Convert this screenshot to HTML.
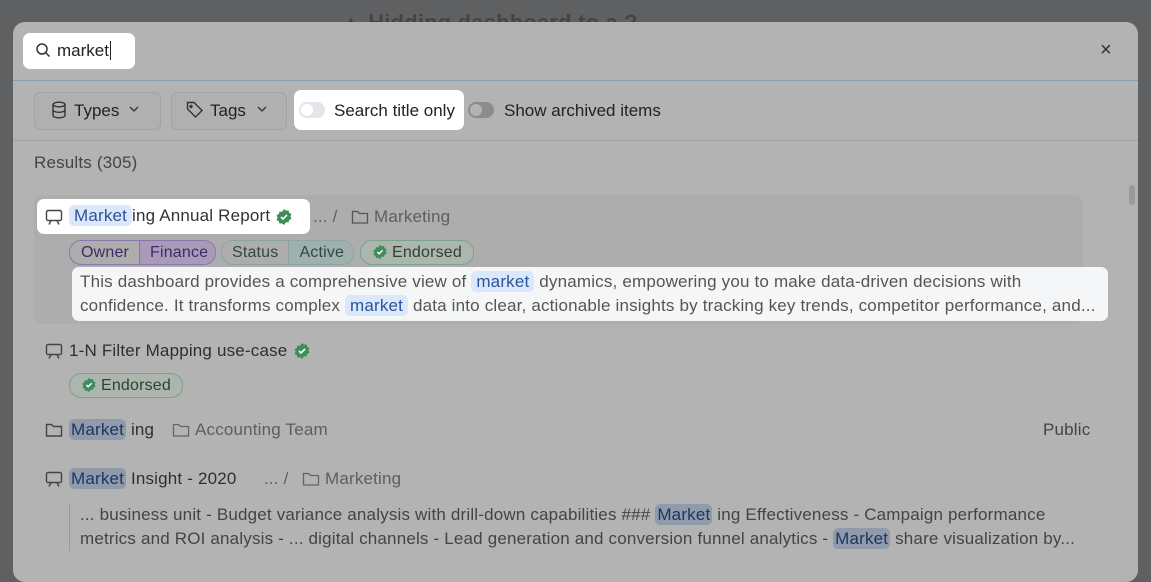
<!DOCTYPE html>
<html><head><meta charset="utf-8"><style>
*{box-sizing:border-box;margin:0;padding:0}
body{width:1151px;height:567px;overflow:hidden;background:#5f6062;font-family:"Liberation Sans",sans-serif;font-size:17px;letter-spacing:0.18px;color:#2f2f2f;position:relative}
.a{position:absolute;white-space:nowrap}
.modal{position:absolute;left:13px;top:22px;width:1125px;height:560px;background:#b3b3b3;border-radius:12px;overflow:hidden}
.w{background:#fff;border-radius:7px}
.hl{background:#dbe7fb;color:#2b5598;border-radius:5px;padding:1px 5px}
.hg{background:#8f9bab;color:#1e3660;border-radius:5px;padding:1px 2px}
.g{color:#5e5e5e}
svg{position:absolute}
.pill{position:absolute;height:25px;border-radius:12px;display:flex;overflow:hidden;font-size:16px;line-height:23px}
.pill span{padding:0 10px}
</style></head><body>
<div class="a" style="left:340px;top:10px;font-size:22px;font-weight:bold;color:#2a2a2a;opacity:.5">▲ Hidding   dashboard   to   a   ?</div>
<div class="modal">
 <div style="position:absolute;left:0;top:58px;width:1125px;height:1px;background:#8e9cb0"></div>
 <div style="position:absolute;left:0;top:118px;width:1125px;height:1px;background:#9f9f9f"></div>
 <div class="w" style="position:absolute;left:10px;top:11px;width:112px;height:36px"></div>
 <svg style="left:22px;top:20px" width="16" height="16" viewBox="0 0 16 16" fill="none" stroke="#333" stroke-width="1.5"><circle cx="7" cy="7" r="5"/><path d="M11 11l3.5 3.5"/></svg>
 <div class="a" style="left:44px;top:19px;color:#222;letter-spacing:0">market<span style="border-left:1px solid #222;margin-left:1px"></span></div>
 <div class="a" style="left:1087px;top:17px;font-size:20px;color:#333">×</div>

 <div style="position:absolute;left:21px;top:70px;width:127px;height:38px;border:1px solid #a3a3a3;border-radius:6px;background:#b0b0b0"></div>
 <svg style="left:38px;top:79px" width="16" height="18" viewBox="0 0 16 18" fill="none" stroke="#333" stroke-width="1.4"><ellipse cx="8" cy="3.5" rx="6" ry="2.3"/><path d="M2 3.5v11c0 1.3 2.7 2.3 6 2.3s6-1 6-2.3v-11M2 9c0 1.3 2.7 2.3 6 2.3S14 10.3 14 9"/></svg>
 <div class="a" style="left:61px;top:79px;font-size:17px;color:#222;letter-spacing:0">Types</div>
 <svg style="left:116px;top:83px" width="10" height="8" viewBox="0 0 10 8" fill="none" stroke="#333" stroke-width="1.3"><path d="M1 2l4 4 4-4"/></svg>
 <div style="position:absolute;left:158px;top:70px;width:116px;height:38px;border:1px solid #a3a3a3;border-radius:6px;background:#b0b0b0"></div>
 <svg style="left:173px;top:79px" width="18" height="18" viewBox="0 0 18 18" fill="none" stroke="#333" stroke-width="1.4"><path d="M1.5 2v6l8 8 6.5-6.5-8-8H1.5z"/><circle cx="5" cy="5.5" r="1"/></svg>
 <div class="a" style="left:197px;top:79px;font-size:17px;color:#222;letter-spacing:0">Tags</div>
 <svg style="left:244px;top:83px" width="10" height="8" viewBox="0 0 10 8" fill="none" stroke="#333" stroke-width="1.3"><path d="M1 2l4 4 4-4"/></svg>
 <div class="w" style="position:absolute;left:281px;top:68px;width:170px;height:40px"></div>
 <div style="position:absolute;left:286px;top:80px;width:26px;height:16px;border-radius:8px;background:#e3e5ea"><div style="position:absolute;left:2px;top:2px;width:12px;height:12px;border-radius:6px;background:#fff"></div></div>
 <div class="a" style="left:321px;top:79px;font-size:17px;color:#222;letter-spacing:0">Search title only</div>
 <div style="position:absolute;left:455px;top:80px;width:26px;height:16px;border-radius:8px;background:#8a8c90"><div style="position:absolute;left:2px;top:2px;width:12px;height:12px;border-radius:6px;background:#b3b3b3"></div></div>
 <div class="a" style="left:491px;top:79px;font-size:17px;color:#222;letter-spacing:0">Show archived items</div>

 <div class="a" style="left:21px;top:131px;color:#444">Results (305)</div>
 <div style="position:absolute;left:1116px;top:163px;width:6px;height:20px;border-radius:3px;background:#9a9a9a"></div>

 <div style="position:absolute;left:21px;top:173px;width:1049px;height:129px;background:#adadad;border-radius:8px"></div>
 <div class="w" style="position:absolute;left:24px;top:177px;width:273px;height:35px"></div>
 <svg style="left:32px;top:187px" width="18" height="17" viewBox="0 0 18 17" fill="none" stroke="#444" stroke-width="1.4"><rect x="1.5" y="1.5" width="15" height="10" rx="1.5"/><path d="M6 11.5l-2 4M12 11.5l2 4"/></svg>
 <div class="a" style="left:56px;top:184px;color:#333"><span class="hl">Market</span>ing Annual Report</div>
 <svg style="left:262px;top:186px" width="18" height="18" viewBox="0 0 18 18"><path d="M9 1l2 1.6 2.5-.2.7 2.4 2.2 1.2-.9 2.4.9 2.4-2.2 1.2-.7 2.4-2.5-.2L9 17l-2-1.6-2.5.2-.7-2.4-2.2-1.2.9-2.4-.9-2.4 2.2-1.2.7-2.4 2.5.2z" fill="#3d8f5a"/><path d="M6 9l2 2 4-4" stroke="#fff" stroke-width="1.6" fill="none"/></svg>
 <div class="a g" style="left:300px;top:185px">... /</div>
 <svg style="left:338px;top:187px" width="18" height="16" viewBox="0 0 18 16" fill="none" stroke="#555" stroke-width="1.3"><path d="M1.5 2.5h5l2 2h8v9.5h-15z"/></svg>
 <div class="a g" style="left:361px;top:185px">Marketing</div>

 <div class="pill" style="left:56px;top:218px;width:147px;border:1px solid #8a76a8;color:#3d2b66"><span style="padding:0 10px 0 11px">Owner</span><span style="background:#a99bb8;border-left:1px solid #8a76a8;padding:0 10px">Finance</span></div>
 <div class="pill" style="left:208px;top:218px;width:133px;border:1px solid #8aa6a0;color:#2d4a44"><span>Status</span><span style="background:#a0b0ac;border-left:1px solid #8aa6a0">Active</span></div>
 <div class="pill" style="left:347px;top:218px;width:114px;border:1px solid #7aa487;color:#2a4232;background:#acb5ae"><span style="padding-left:31px">Endorsed</span></div>
 <svg style="left:359px;top:222px" width="16" height="16" viewBox="0 0 18 18"><path d="M9 1l2 1.6 2.5-.2.7 2.4 2.2 1.2-.9 2.4.9 2.4-2.2 1.2-.7 2.4-2.5-.2L9 17l-2-1.6-2.5.2-.7-2.4-2.2-1.2.9-2.4-.9-2.4 2.2-1.2.7-2.4 2.5.2z" fill="#3d8f5a"/><path d="M6 9l2 2 4-4" stroke="#fff" stroke-width="1.6" fill="none"/></svg>

 <div style="position:absolute;left:59px;top:245px;width:1036px;height:54px;background:#f5f6f8;border-radius:7px"></div>
 <div class="a" style="left:67px;top:248px;color:#555;line-height:24px">This dashboard provides a comprehensive view of <span class="hl">market</span> dynamics, empowering you to make data-driven decisions with<br>confidence. It transforms complex <span class="hl">market</span> data into clear, actionable insights by tracking key trends, competitor performance, and...</div>

 <svg style="left:32px;top:321px" width="18" height="17" viewBox="0 0 18 17" fill="none" stroke="#444" stroke-width="1.4"><rect x="1.5" y="1.5" width="15" height="10" rx="1.5"/><path d="M6 11.5l-2 4M12 11.5l2 4"/></svg>
 <div class="a" style="left:56px;top:319px">1-N Filter Mapping use-case</div>
 <svg style="left:280px;top:320px" width="18" height="18" viewBox="0 0 18 18"><path d="M9 1l2 1.6 2.5-.2.7 2.4 2.2 1.2-.9 2.4.9 2.4-2.2 1.2-.7 2.4-2.5-.2L9 17l-2-1.6-2.5.2-.7-2.4-2.2-1.2.9-2.4-.9-2.4 2.2-1.2.7-2.4 2.5.2z" fill="#3d8f5a"/><path d="M6 9l2 2 4-4" stroke="#fff" stroke-width="1.6" fill="none"/></svg>
 <div class="pill" style="left:56px;top:351px;width:114px;border:1px solid #7aa487;color:#2a4232;background:#acb5ae"><span style="padding-left:31px">Endorsed</span></div>
 <svg style="left:68px;top:355px" width="16" height="16" viewBox="0 0 18 18"><path d="M9 1l2 1.6 2.5-.2.7 2.4 2.2 1.2-.9 2.4.9 2.4-2.2 1.2-.7 2.4-2.5-.2L9 17l-2-1.6-2.5.2-.7-2.4-2.2-1.2.9-2.4-.9-2.4 2.2-1.2.7-2.4 2.5.2z" fill="#3d8f5a"/><path d="M6 9l2 2 4-4" stroke="#fff" stroke-width="1.6" fill="none"/></svg>

 <svg style="left:32px;top:400px" width="18" height="16" viewBox="0 0 18 16" fill="none" stroke="#444" stroke-width="1.4"><path d="M1.5 2.5h5l2 2h8v9.5h-15z"/></svg>
 <div class="a" style="left:56px;top:398px"><span class="hg">Market</span> ing</div>
 <svg style="left:159px;top:400px" width="18" height="16" viewBox="0 0 18 16" fill="none" stroke="#666" stroke-width="1.3"><path d="M1.5 2.5h5l2 2h8v9.5h-15z"/></svg>
 <div class="a g" style="left:182px;top:398px">Accounting Team</div>
 <div class="a" style="left:1030px;top:398px;color:#444">Public</div>

 <svg style="left:32px;top:449px" width="18" height="17" viewBox="0 0 18 17" fill="none" stroke="#444" stroke-width="1.4"><rect x="1.5" y="1.5" width="15" height="10" rx="1.5"/><path d="M6 11.5l-2 4M12 11.5l2 4"/></svg>
 <div class="a" style="left:56px;top:447px"><span class="hg">Market</span> Insight - 2020</div>
 <div class="a g" style="left:251px;top:447px">... /</div>
 <svg style="left:289px;top:449px" width="18" height="16" viewBox="0 0 18 16" fill="none" stroke="#666" stroke-width="1.3"><path d="M1.5 2.5h5l2 2h8v9.5h-15z"/></svg>
 <div class="a g" style="left:312px;top:447px">Marketing</div>
 <div style="position:absolute;left:56px;top:481px;width:1px;height:48px;background:#999"></div>
 <div class="a" style="left:67px;top:481px;color:#444;line-height:24px">... business unit - Budget variance analysis with drill-down capabilities ### <span class="hg">Market</span> ing Effectiveness - Campaign performance<br>metrics and ROI analysis - ... digital channels - Lead generation and conversion funnel analytics - <span class="hg">Market</span> share visualization by...</div>
</div>
</body></html>
